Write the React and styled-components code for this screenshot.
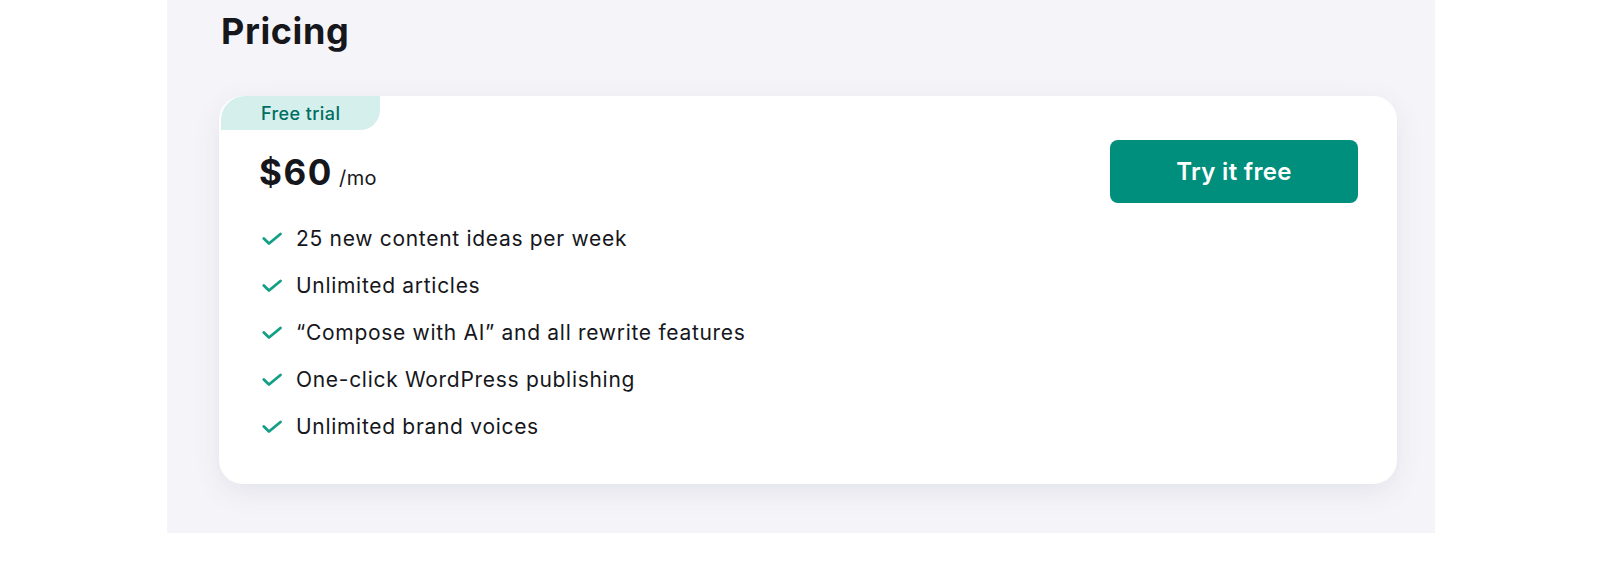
import React from 'react';
import styled, { createGlobalStyle } from 'styled-components';

const GlobalStyle = createGlobalStyle`
  body {
    margin: 0;
    background: #ffffff;
    font-family: 'Inter', 'Liberation Sans', sans-serif;
    color: #16171c;
  }
`;

const Section = styled.section`
  box-sizing: border-box;
  width: 1268px;
  height: 533px;
  margin-left: 167px;
  padding: 9px 38px 0 52px;
  background: #f5f5f9;
`;

const Title = styled.h2`
  margin: 0 0 43px 2px;
  font-size: 36px;
  line-height: 44px;
  font-weight: 700;
  letter-spacing: 0.6px;
  color: #16171c;
`;

const Card = styled.div`
  width: 1178px;
  background: #ffffff;
  border-radius: 24px;
  box-shadow: 0 8px 28px rgba(40, 40, 90, 0.09);
  padding-bottom: 34px;
  overflow: hidden;
`;

const Badge = styled.div`
  display: inline-flex;
  align-items: center;
  box-sizing: border-box;
  height: 34px;
  margin-left: 2px;
  padding: 0 40px;
  background: #d5efec;
  color: #006e62;
  font-size: 18px;
  font-weight: 500;
  letter-spacing: 0.4px;
  border-radius: 24px 0 20px 0;
`;

const PriceRow = styled.div`
  display: flex;
  align-items: center;
  justify-content: space-between;
  padding: 10px 39px 0 40px;
`;

const Price = styled.div`
  display: flex;
  align-items: baseline;
`;

const Amount = styled.span`
  font-size: 35px;
  font-weight: 700;
  letter-spacing: 1.6px;
  color: #16171c;
`;

const Period = styled.span`
  margin-left: 6px;
  font-size: 20px;
  letter-spacing: 0.4px;
  color: #16171c;
`;

const TryButton = styled.button`
  width: 248px;
  height: 63px;
  border: none;
  border-radius: 8px;
  background: #008e7d;
  color: #ffffff;
  font-family: inherit;
  font-size: 24px;
  font-weight: 600;
  letter-spacing: 0.3px;
  cursor: pointer;
`;

const List = styled.ul`
  list-style: none;
  margin: 12px 0 0;
  padding: 0 0 0 41px;
`;

const Item = styled.li`
  display: flex;
  align-items: center;
  height: 47px;
  font-size: 21px;
  letter-spacing: 0.7px;
  color: #16171c;
`;

const CheckIcon = styled.svg`
  width: 24px;
  height: 24px;
  margin-right: 12px;
  flex-shrink: 0;
`;

const Check = () => (
  <CheckIcon viewBox="0 0 24 24" fill="none">
    <path
      d="M3.8 11.5 L9 16.5 L20.5 7"
      stroke="#139f86"
      strokeWidth="2.8"
      strokeLinecap="round"
      strokeLinejoin="round"
    />
  </CheckIcon>
);

const features = [
  '25 new content ideas per week',
  'Unlimited articles',
  '\u201CCompose with AI\u201D and all rewrite features',
  'One-click WordPress publishing',
  'Unlimited brand voices',
];

const App = () => {
  return (
    <>
      <GlobalStyle />
      <Section>
        <Title>Pricing</Title>
        <Card>
          <Badge>Free trial</Badge>
          <PriceRow>
            <Price>
              <Amount>$60</Amount>
              <Period>/mo</Period>
            </Price>
            <TryButton>Try it free</TryButton>
          </PriceRow>
          <List>
            {features.map((f) => (
              <Item key={f}>
                <Check />
                {f}
              </Item>
            ))}
          </List>
        </Card>
      </Section>
    </>
  );
};

export default App;
